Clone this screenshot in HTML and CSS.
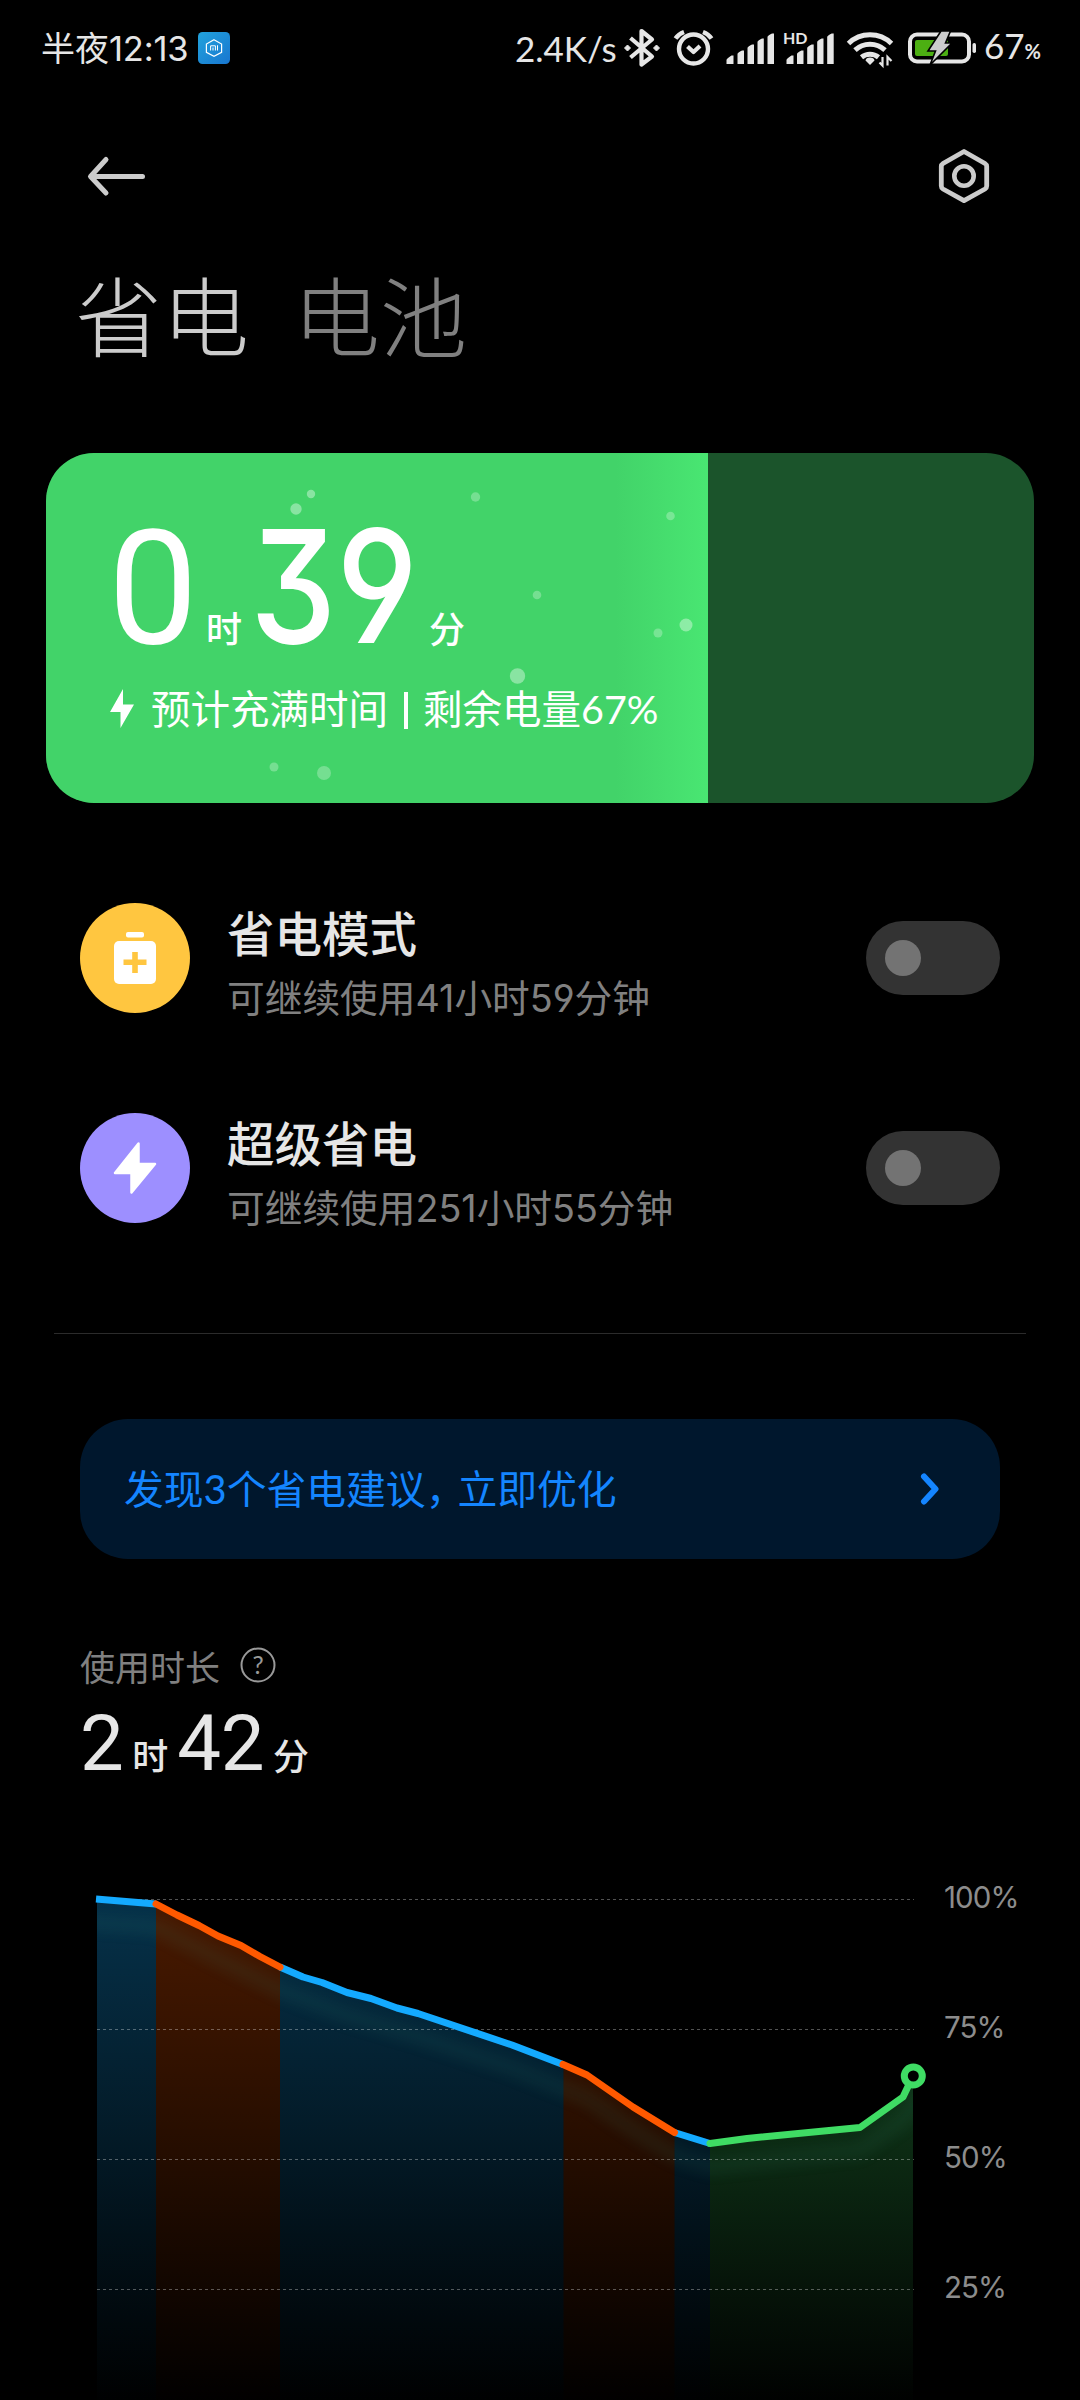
FILE: index.html
```html
<!DOCTYPE html>
<html lang="zh-CN">
<head>
<meta charset="utf-8">
<title>省电与电池</title>
<link rel="stylesheet" href="styles.css">
</head>
<body>
<div class="screen">
  <header class="statusbar">
    <span class="clock">半夜<span class="clock-digits">12:13</span></span>
    <svg class="app-badge" width="32" height="32" viewBox="0 0 32 32">
      <defs><linearGradient id="badge" x1="0" y1="0" x2="1" y2="1"><stop offset="0" stop-color="#22a3dc"/><stop offset="1" stop-color="#1876d0"/></linearGradient></defs>
      <rect width="32" height="32" rx="4.500" fill="url(#badge)"/>
      <path d="M16 7.800 23.600 12v8.400L16 24.400 8.400 20.400V12Z" fill="none" stroke="#fff" stroke-width="1.200"/>
      <path d="M12.600 18.500v-4.700h4.800v4.700M15 15.500v3M19.500 13.300v5.200" fill="none" stroke="#fff" stroke-width="1"/>
    </svg>
    <span class="net-speed">2.4K/s</span>
    <svg class="status-icons" width="370" height="44" viewBox="620 26 370 44">
      <g fill="none" stroke="#e6e6e6" stroke-width="4.200" stroke-linejoin="round">
        <path d="M630.500 38 652 56.500 641.500 64.500V31L652 39.500 630.500 57.500"/>
        <circle cx="693.500" cy="49" r="14.500" stroke-width="4.400"/>
        <path d="m687.500 46.500 6 5.500 6.500-6"/>
        <path d="M675.500 38.500q3-4.500 8.500-6.500M711.500 38.500q-3-4.500-8.500-6.500" stroke-width="4.400"/>
      </g>
      <path d="m627.500 45 3 3-3 3-3-3ZM656.500 45l3 3-3 3-3-3Z" fill="#e6e6e6" stroke="#e6e6e6"/>
      <g fill="#e6e6e6">
        <path d="M726.500 60q0-1.500 5-4.500h2V64h-7ZM737.500 54q0-1.500 4.500-3.500h2V64h-6.500ZM747.500 48q0-1.500 4.500-3.500h2V64h-6.500ZM757.500 42q0-1.500 4.500-3.500h1.800V64h-6.300ZM767.500 37q0-1.500 4.500-3.500h2V64h-6.500Z"/>
        <path d="M786.500 60q0-1.500 5-4.500h2V64h-7ZM797 54q0-1.500 4.500-3.500h2V64H797ZM807.200 48q0-1.500 4.500-3.500h2V64h-6.500ZM817.200 42q0-1.500 4.500-3.500h1.800V64h-6.300ZM827.200 37q0-1.500 4.500-3.500h2V64h-6.500Z"/>
      </g>
      <text class="hd" x="783" y="44">HD</text>
      <g fill="none" stroke="#e6e6e6" stroke-width="5">
        <path d="M848.500 43.500a31 31 0 0 1 43 0M855 50.200a22 22 0 0 1 30 0M861.500 57.200a13.500 13.500 0 0 1 17 0"/>
      </g>
      <path d="M870 57.500q4 0 4.500 3L870 65l-4.500-4.500q.5-3 4.500-3Z" fill="#e6e6e6"/>
      <path d="M882.500 57v8.500l-3-3M887.500 65.500V57l4 4" fill="none" stroke="#e6e6e6" stroke-width="2.200"/>
      <rect x="910" y="34.500" width="59" height="27" rx="7" fill="none" stroke="#e6e6e6" stroke-width="4"/>
      <rect x="972.500" y="43" width="3.500" height="10" rx="1.700" fill="#e6e6e6"/>
      <rect x="915" y="40" width="33" height="16" rx="2" fill="#4caf12"/>
      <path d="M941 31h9.500l-5 12h6.500L930 65l5.500-14H928Z" fill="#ccc" stroke="#000" stroke-width="1.600"/>
    </svg>
    <span class="level">67<span class="level-unit">%</span></span>
  </header>

  <nav class="toolbar">
    <svg width="60" height="44" viewBox="86 154 60 44"><path d="M142.500 176.500H92M106 159.500 90.500 176.500 106 193" fill="none" stroke="#ccc" stroke-width="5" stroke-linecap="round" stroke-linejoin="round"/></svg>
    <svg width="52" height="58" viewBox="938 147 52 58"><path d="M964 151.500 985 163.500Q986.700 164.500 986.700 166.500V186Q986.700 188 985 189L964 200.700 943 189Q941.300 188 941.300 186V166.500Q941.300 164.500 943 163.500Z" fill="none" stroke="#ccc" stroke-width="4.800" stroke-linejoin="round"/><circle cx="964" cy="176" r="9.700" fill="none" stroke="#ccc" stroke-width="4.600"/></svg>
  </nav>

  <div class="tabs"><h1 class="tab tab-active">省电</h1><span class="tab">电池</span></div>

  <section class="battery">
    <div class="battery-fill" style="width:67%">
      <svg class="bubbles" width="662" height="350" viewBox="46 453 662 350" fill="#fff">
        <g fill-opacity=".38"><circle cx="311" cy="494" r="4.200"/><circle cx="296" cy="509" r="5.700"/><circle cx="517.500" cy="676" r="7.700"/><circle cx="686" cy="625" r="6.500"/></g>
        <g fill-opacity=".27"><circle cx="475.500" cy="497" r="4.700"/><circle cx="670.500" cy="516" r="4.300"/><circle cx="537" cy="595" r="4.300"/><circle cx="658" cy="633" r="4.500"/><circle cx="274" cy="767" r="4.500"/><circle cx="324" cy="773" r="7"/></g>
      </svg>
    </div>
    <div class="battery-text">
      <div class="charge-time"><span class="num-hour">0</span><span class="unit">时</span><span class="num-min">39</span><span class="unit">分</span></div>
      <div class="charge-note">
        <svg width="24" height="40" viewBox="0 0 24 40"><path d="M13 0 0 23h10.500v16L24 15.500H13Z" fill="#fff"/></svg>
        <span>预计充满时间<i class="bar"></i>剩余电量67%</span>
      </div>
    </div>
  </section>

  <section class="modes">
    <div class="mode">
      <svg class="mode-icon" width="110" height="110" viewBox="0 0 110 110"><circle cx="55" cy="55" r="55" fill="#ffc640"/><rect x="46" y="29" width="18" height="5.500" rx="2" fill="#fff"/><rect x="34" y="38" width="42" height="43" rx="5" fill="#fff"/><path d="M55 49v21M43.500 59.300h23" stroke="#ffc640" stroke-width="5.600"/></svg>
      <div class="mode-text"><h2>省电模式</h2><p>可继续使用41小时59分钟</p></div>
      <span class="switch"></span>
    </div>
    <div class="mode">
      <svg class="mode-icon" width="110" height="110" viewBox="0 0 110 110"><circle cx="55" cy="55" r="55" fill="#9d8fff"/><path d="M58.500 30.500V51H75L51.500 79.500V60H35Z" fill="#fff" stroke="#fff" stroke-width="2.500" stroke-linejoin="round"/></svg>
      <div class="mode-text"><h2>超级省电</h2><p>可继续使用251小时55分钟</p></div>
      <span class="switch"></span>
    </div>
  </section>

  <hr class="divider">

  <a class="advice"><span>发现3个省电建议<span class="comma">，</span>立即优化</span>
    <svg width="20" height="34" viewBox="0 0 20 34"><path d="M4 4.500 15.500 17 4 29.500" fill="none" stroke="#1485ff" stroke-width="6" stroke-linecap="round" stroke-linejoin="round"/></svg>
  </a>

  <section class="usage">
    <div class="usage-label"><span>使用时长</span>
      <svg width="36" height="36" viewBox="0 0 36 36"><circle cx="18" cy="18" r="16.500" fill="none" stroke="#999" stroke-width="2"/><text class="help" x="18" y="26.500">?</text></svg>
    </div>
    <div class="usage-time"><span class="usage-num">2</span><span class="usage-unit">时</span><span class="usage-num">42</span><span class="usage-unit">分</span></div>
  </section>

  <svg class="chart" width="1080" height="540" viewBox="0 1860 1080 540">
    <defs>
      <linearGradient id="blue" gradientUnits="userSpaceOnUse" x1="0" y1="1897" x2="0" y2="2410"><stop offset="0" stop-color="#14aaff" stop-opacity=".29"/><stop offset="1" stop-color="#14aaff" stop-opacity="0"/></linearGradient>
      <linearGradient id="orange" gradientUnits="userSpaceOnUse" x1="0" y1="1897" x2="0" y2="2410"><stop offset="0" stop-color="#ff5900" stop-opacity=".29"/><stop offset="1" stop-color="#ff5900" stop-opacity="0"/></linearGradient>
      <linearGradient id="green" gradientUnits="userSpaceOnUse" x1="0" y1="2070" x2="0" y2="2410"><stop offset="0" stop-color="#3fdc64" stop-opacity=".25"/><stop offset="1" stop-color="#3fdc64" stop-opacity="0"/></linearGradient>
      <filter id="soft" x="-10%" y="-20%" width="120%" height="140%"><feGaussianBlur stdDeviation="6.500"/></filter>
      <clipPath id="area"><path d="M97 1899 156 1904 177 1915 199 1925.500 218 1936 241 1945.500 260 1956.500 280 1967 303 1977 322 1982.500 347 1992.500 371 1998.500 397 2008 418 2013.500 512 2045 563 2064.500 587 2075 633 2107 674.500 2132.500 710 2143.500 747 2138.500 860 2127.500 903 2097 913 2076V2400H97Z"/></clipPath>
    </defs>
    <g clip-path="url(#area)">
      <path d="M97 1890h59v520H97ZM280 1890h283.500v520H280ZM674.500 1890H710v520h-35.500Z" fill="url(#blue)"/>
      <path d="M156 1890h124v520H156ZM563.500 1890h111v520h-111Z" fill="url(#orange)"/>
      <path d="M710 1890h203v520H710Z" fill="url(#green)"/>
      <path transform="translate(0 23)" filter="url(#soft)" opacity=".09" fill="none" stroke="#3f9f88" stroke-width="17" d="M70 1898 156 1904 218 1936 280 1967 347 1992.500 418 2013.500 512 2045 587 2075 633 2107 674.500 2132.500 710 2143.500 860 2127.500 903 2097 930 2060"/>
    </g>
    <path d="M97 1899.500H914M97 2029.500H914M97 2159.500H914M97 2289.500H914" stroke="#fff" stroke-opacity=".32" stroke-width="1" stroke-dasharray="3 3"/>
    <g fill="none" stroke-width="7" stroke-linejoin="round">
      <path stroke="#14aaff" d="M96 1899 156 1904M280 1967 303 1977 322 1982.500 347 1992.500 371 1998.500 397 2008 418 2013.500 512 2045 563 2064.500M674.500 2132.500 710 2143.500"/>
      <path stroke="#ff5900" stroke-linecap="round" d="M156 1904 177 1915 199 1925.500 218 1936 241 1945.500 260 1956.500 280 1967M563 2064.500 587 2075 633 2107 674.500 2132.500"/>
      <path stroke="#3fdc64" stroke-linecap="round" d="M710 2143.500 747 2138.500 860 2127.500 903 2097 913 2076"/>
    </g>
    <circle cx="913.300" cy="2076" r="9" fill="#000" stroke="#3fdc64" stroke-width="7"/>
    <g class="axis"><text x="944" y="1908">100%</text><text x="944" y="2038">75%</text><text x="944" y="2168">50%</text><text x="944" y="2298">25%</text></g>
  </svg>
</div>
</body>
</html>
```
FILE: styles.css
```css
* { box-sizing: border-box; }
body { margin: 0; background: #000; }
h1, h2, p { margin: 0; font-weight: inherit; }
svg { display: block; flex: none; }

.screen {
  width: 1080px;
  height: 2400px;
  overflow: hidden;
  background: #000;
  color: #e6e6e6;
  font-family: Lato, "Noto Sans CJK SC", sans-serif;
}

.statusbar {
  display: flex;
  align-items: center;
  height: 96px;
  padding-left: 41px;
  font-size: 34px;
  line-height: 44px;
}
.clock { width: 157px; white-space: nowrap; }
.clock-digits { font-family: Inter, sans-serif; font-size: 34.500px; letter-spacing: -.2px; }
.net-speed { width: 105px; margin-left: 285px; font-size: 35px; white-space: nowrap; }
.level { margin-left: -6px; font-size: 35px; }
.level-unit { font-size: 20px; font-weight: 700; }
.hd { font: 700 16px Lato, sans-serif; fill: #e6e6e6; }

.toolbar {
  display: flex;
  align-items: center;
  justify-content: space-between;
  height: 160px;
  padding: 0 90px 0 86px;
}

.tabs { display: flex; gap: 44px; padding-left: 75px; height: 197px; }
.tab { font-size: 87px; font-weight: 300; line-height: 124px; color: #808080; }
.tab-active { color: #ccc; }

.battery {
  position: relative;
  height: 350px;
  margin: 0 46px;
  border-radius: 48px;
  overflow: hidden;
  background: #1b542b;
  color: #fff;
}
.battery-fill {
  position: absolute;
  inset: 0 auto 0 0;
  background: linear-gradient(90deg, #42d369 86%, #49e672 100%);
}
.battery-text { position: relative; padding: 53px 0 0 64px; }
.charge-time { display: flex; align-items: baseline; height: 175px; line-height: 160px; }
.num-hour { width: 96px; text-indent: -2px; font-family: Roboto, sans-serif; font-size: 160px; font-weight: 430; }
.num-min {
  width: 179px;
  margin-left: 8px;
  font-family: Inter, sans-serif;
  font-feature-settings: "cv09", "cv04";
  font-size: 157px;
  font-weight: 450;
  transform: scaleX(.875);
  transform-origin: left;
}
.unit { font-size: 36px; font-weight: 500; }
.charge-note { display: flex; align-items: center; gap: 17px; font-size: 39.500px; line-height: 56px; }
.bar { display: inline-block; width: 4px; height: 37px; margin: 0 15.500px; vertical-align: -5px; background: #fff; }

.modes { padding: 100px 80px 0; display: grid; gap: 100px; }
.mode { display: flex; align-items: center; height: 110px; }
.mode-text { margin-left: 37px; flex: 1; padding-top: 15px; }
.mode h2 { font-size: 47.500px; line-height: 64px; font-weight: 500; }
.mode p { font-family: Inter, "Noto Sans CJK SC", sans-serif; font-feature-settings: "cv03", "cv04"; font-size: 37.700px; line-height: 64px; color: #808080; }
.switch { width: 134px; height: 74px; border-radius: 37px; background: #333; padding: 19px; }
.switch::before { content: ""; display: block; width: 36px; height: 36px; border-radius: 50%; background: #737373; }

.divider { height: 1px; margin: 110px 54px 0; border: 0; background: #2b2b2b; }

.advice {
  display: flex;
  align-items: center;
  justify-content: space-between;
  height: 140px;
  margin: 85px 80px 0;
  padding: 0 60px 0 44px;
  border-radius: 48px;
  background: #00172d;
  color: #1485ff;
  font-size: 39.800px;
  line-height: 56px;
}
.comma { letter-spacing: -8px; }

.usage { padding: 81px 80px 0; height: 301px; }
.usage-label { display: flex; align-items: center; gap: 20px; height: 50px; font-size: 35px; color: #808080; }
.help { font: 25px Lato, sans-serif; fill: #999; text-anchor: middle; }
.usage-time { display: flex; align-items: baseline; gap: 9px; margin-top: 9px; line-height: 90px; }
.usage-num { font-family: Roboto, sans-serif; font-size: 78px; font-weight: 430; letter-spacing: -.5px; }
.usage-unit { font-size: 36px; font-weight: 500; }
.axis { font: 29.500px Inter, sans-serif; letter-spacing: -.9px; fill: #8c8c8c; }
```
